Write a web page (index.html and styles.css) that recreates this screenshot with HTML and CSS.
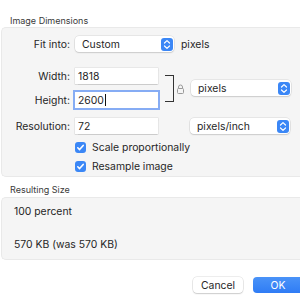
FILE: index.html
```html
<!DOCTYPE html>
<html lang="en">
  <head>
    <meta charset="UTF-8" />
    <title>Image Size</title>
    <link rel="stylesheet" href="styles.css">
  </head>
  <body>
    <div class="section-title">Image Dimensions</div>
    <div class="panel dims">
      <div class="row fit-row">
        <span class="lbl">Fit into:</span>
        <div class="popup fit-popup">
          <span>Custom</span>
          <span class="arrows">
            <svg viewBox="0 0 12 13"><path d="M3.5 5 L6 2.6 L8.5 5 M3.5 8 L6 10.4 L8.5 8" /></svg>
          </span>
        </div>
        <span class="unit">pixels</span>
      </div>

      <div class="size-group">
        <div class="size-fields">
          <div class="row">
            <span class="lbl">Width:</span>
            <div class="field">1818</div>
          </div>
          <div class="row">
            <span class="lbl">Height:</span>
            <div class="field focused">2600<span class="caret"></span></div>
          </div>
        </div>
        <div class="bracket"></div>
        <svg class="lock" viewBox="0 0 7 10">
          <path d="M1.5 4.5 V3 a2 2 0 0 1 4 0 V4.5" />
          <rect x="0.5" y="4.5" width="6" height="5" rx="1" />
        </svg>
        <div class="popup unit-popup">
          <span>pixels</span>
          <span class="arrows">
            <svg viewBox="0 0 12 13"><path d="M3.5 5 L6 2.6 L8.5 5 M3.5 8 L6 10.4 L8.5 8" /></svg>
          </span>
        </div>
      </div>

      <div class="row res-row">
        <span class="lbl">Resolution:</span>
        <div class="field">72</div>
        <div class="popup unit-popup">
          <span>pixels/inch</span>
          <span class="arrows">
            <svg viewBox="0 0 12 13"><path d="M3.5 5 L6 2.6 L8.5 5 M3.5 8 L6 10.4 L8.5 8" /></svg>
          </span>
        </div>
      </div>

      <div class="check-row first">
        <span class="check"><svg viewBox="0 0 11 11"><path d="M2.8 5.8 L4.6 7.6 L8.2 3.4" /></svg></span>
        <span>Scale proportionally</span>
      </div>
      <div class="check-row">
        <span class="check"><svg viewBox="0 0 11 11"><path d="M2.8 5.8 L4.6 7.6 L8.2 3.4" /></svg></span>
        <span>Resample image</span>
      </div>
    </div>

    <div class="section-title result-title">Resulting Size</div>
    <div class="panel result">
      <div class="result-line">100 percent</div>
      <div class="result-line second">570 KB (was 570 KB)</div>
    </div>

    <div class="buttons">
      <button class="btn">Cancel</button>
      <button class="btn primary">OK</button>
    </div>
  </body>
</html>
```

FILE: styles.css
```css
body {
  margin: 0;
  width: 300px;
  height: 300px;
  overflow: hidden;
  background: #ffffff;
  font-family: Inter, "Noto Sans", sans-serif;
  font-size: 10.4px;
  color: #262626;
}

.section-title {
  padding: 15px 0 0 10px;
  font-size: 9px;
  line-height: 12px;
  color: #3a3a3a;
}

.result-title {
  padding-top: 7px;
}

/* panels run off the right edge of the shot */
.panel {
  margin-left: 1px;
  background: #f5f5f5;
  border: 1px solid #e9e9e9;
  border-right: none;
  border-radius: 5px 0 0 5px;
}

.dims {
  padding: 8px 0 1px 0;
}

.row {
  display: flex;
  align-items: center;
  height: 16px;
}

.lbl {
  width: 68px;
  padding-right: 5px;
  text-align: right;
  flex-shrink: 0;
}

.popup {
  display: flex;
  align-items: center;
  justify-content: space-between;
  box-sizing: border-box;
  height: 16px;
  padding: 0 1px 0 7px;
  background: #fff;
  border-radius: 4px;
  box-shadow: 0 0 0 0.5px rgba(0, 0, 0, 0.12), 0 1px 1.5px rgba(0, 0, 0, 0.12);
}

.fit-popup {
  width: 99px;
}

.unit {
  margin-left: 7px;
}

.arrows {
  display: flex;
  width: 12px;
  height: 13px;
  background: #3b87f6;
  border-radius: 3px;
}

.arrows svg {
  width: 12px;
  height: 13px;
  fill: none;
  stroke: #fff;
  stroke-width: 1.2;
  stroke-linecap: round;
  stroke-linejoin: round;
}

.size-group {
  display: flex;
  align-items: center;
  margin-top: 16px;
}

.size-fields {
  display: flex;
  flex-direction: column;
  gap: 8px;
}

.field {
  display: flex;
  align-items: center;
  box-sizing: border-box;
  width: 83px;
  height: 16px;
  padding-left: 3px;
  background: #fff;
  box-shadow: 0 0 0 0.5px rgba(0, 0, 0, 0.1), 0 0.5px 1px rgba(0, 0, 0, 0.12);
}

.field.focused {
  box-shadow: 0 0 0 2px #86acf4;
}

.caret {
  width: 1px;
  height: 12px;
  margin-left: 1px;
  background: #111;
}

.bracket {
  box-sizing: border-box;
  width: 9px;
  height: 27px;
  margin-left: 7px;
  border: 1px solid #333;
  border-left: none;
}

.lock {
  width: 7px;
  height: 10px;
  margin: 2px 0 0 3px;
  fill: none;
  stroke: #9a9a9a;
  stroke-width: 1;
}

.unit-popup {
  width: 100px;
  margin-left: 7px;
}

.res-row {
  margin-top: 10px;
}

.res-row .unit-popup {
  margin-left: 32px;
}

.check-row {
  display: flex;
  align-items: center;
  height: 18px;
  padding-left: 73px;
}

.check-row.first {
  margin-top: 4px;
  margin-bottom: 1px;
}

.check {
  display: flex;
  width: 11px;
  height: 11px;
  margin-right: 6px;
  background: #3b87f6;
  border-radius: 3px;
}

.check svg {
  width: 11px;
  height: 11px;
  fill: none;
  stroke: #fff;
  stroke-width: 1.6;
  stroke-linecap: round;
  stroke-linejoin: round;
}

.result {
  margin-top: 1px;
  padding: 6px 0 6px 12px;
}

.result-line {
  line-height: 16px;
}

.result-line.second {
  margin-top: 17px;
}

.buttons {
  display: flex;
  gap: 10px;
  margin-top: 17px;
  padding-left: 193px;
}

.btn {
  box-sizing: border-box;
  width: 50px;
  height: 16px;
  padding: 0;
  border: none;
  border-radius: 4px;
  background: #fff;
  font-family: Inter, "Noto Sans", sans-serif;
  font-size: 10.4px;
  color: #262626;
  box-shadow: 0 0 0 0.5px rgba(0, 0, 0, 0.14), 0 1px 1.5px rgba(0, 0, 0, 0.14);
  flex-shrink: 0;
}

.btn.primary {
  width: 47px;
  padding-left: 3px;
  border-radius: 4px 0 0 4px;
  background: linear-gradient(#4a93f8, #2f7cf5);
  color: #fff;
  box-shadow: none;
}
```
